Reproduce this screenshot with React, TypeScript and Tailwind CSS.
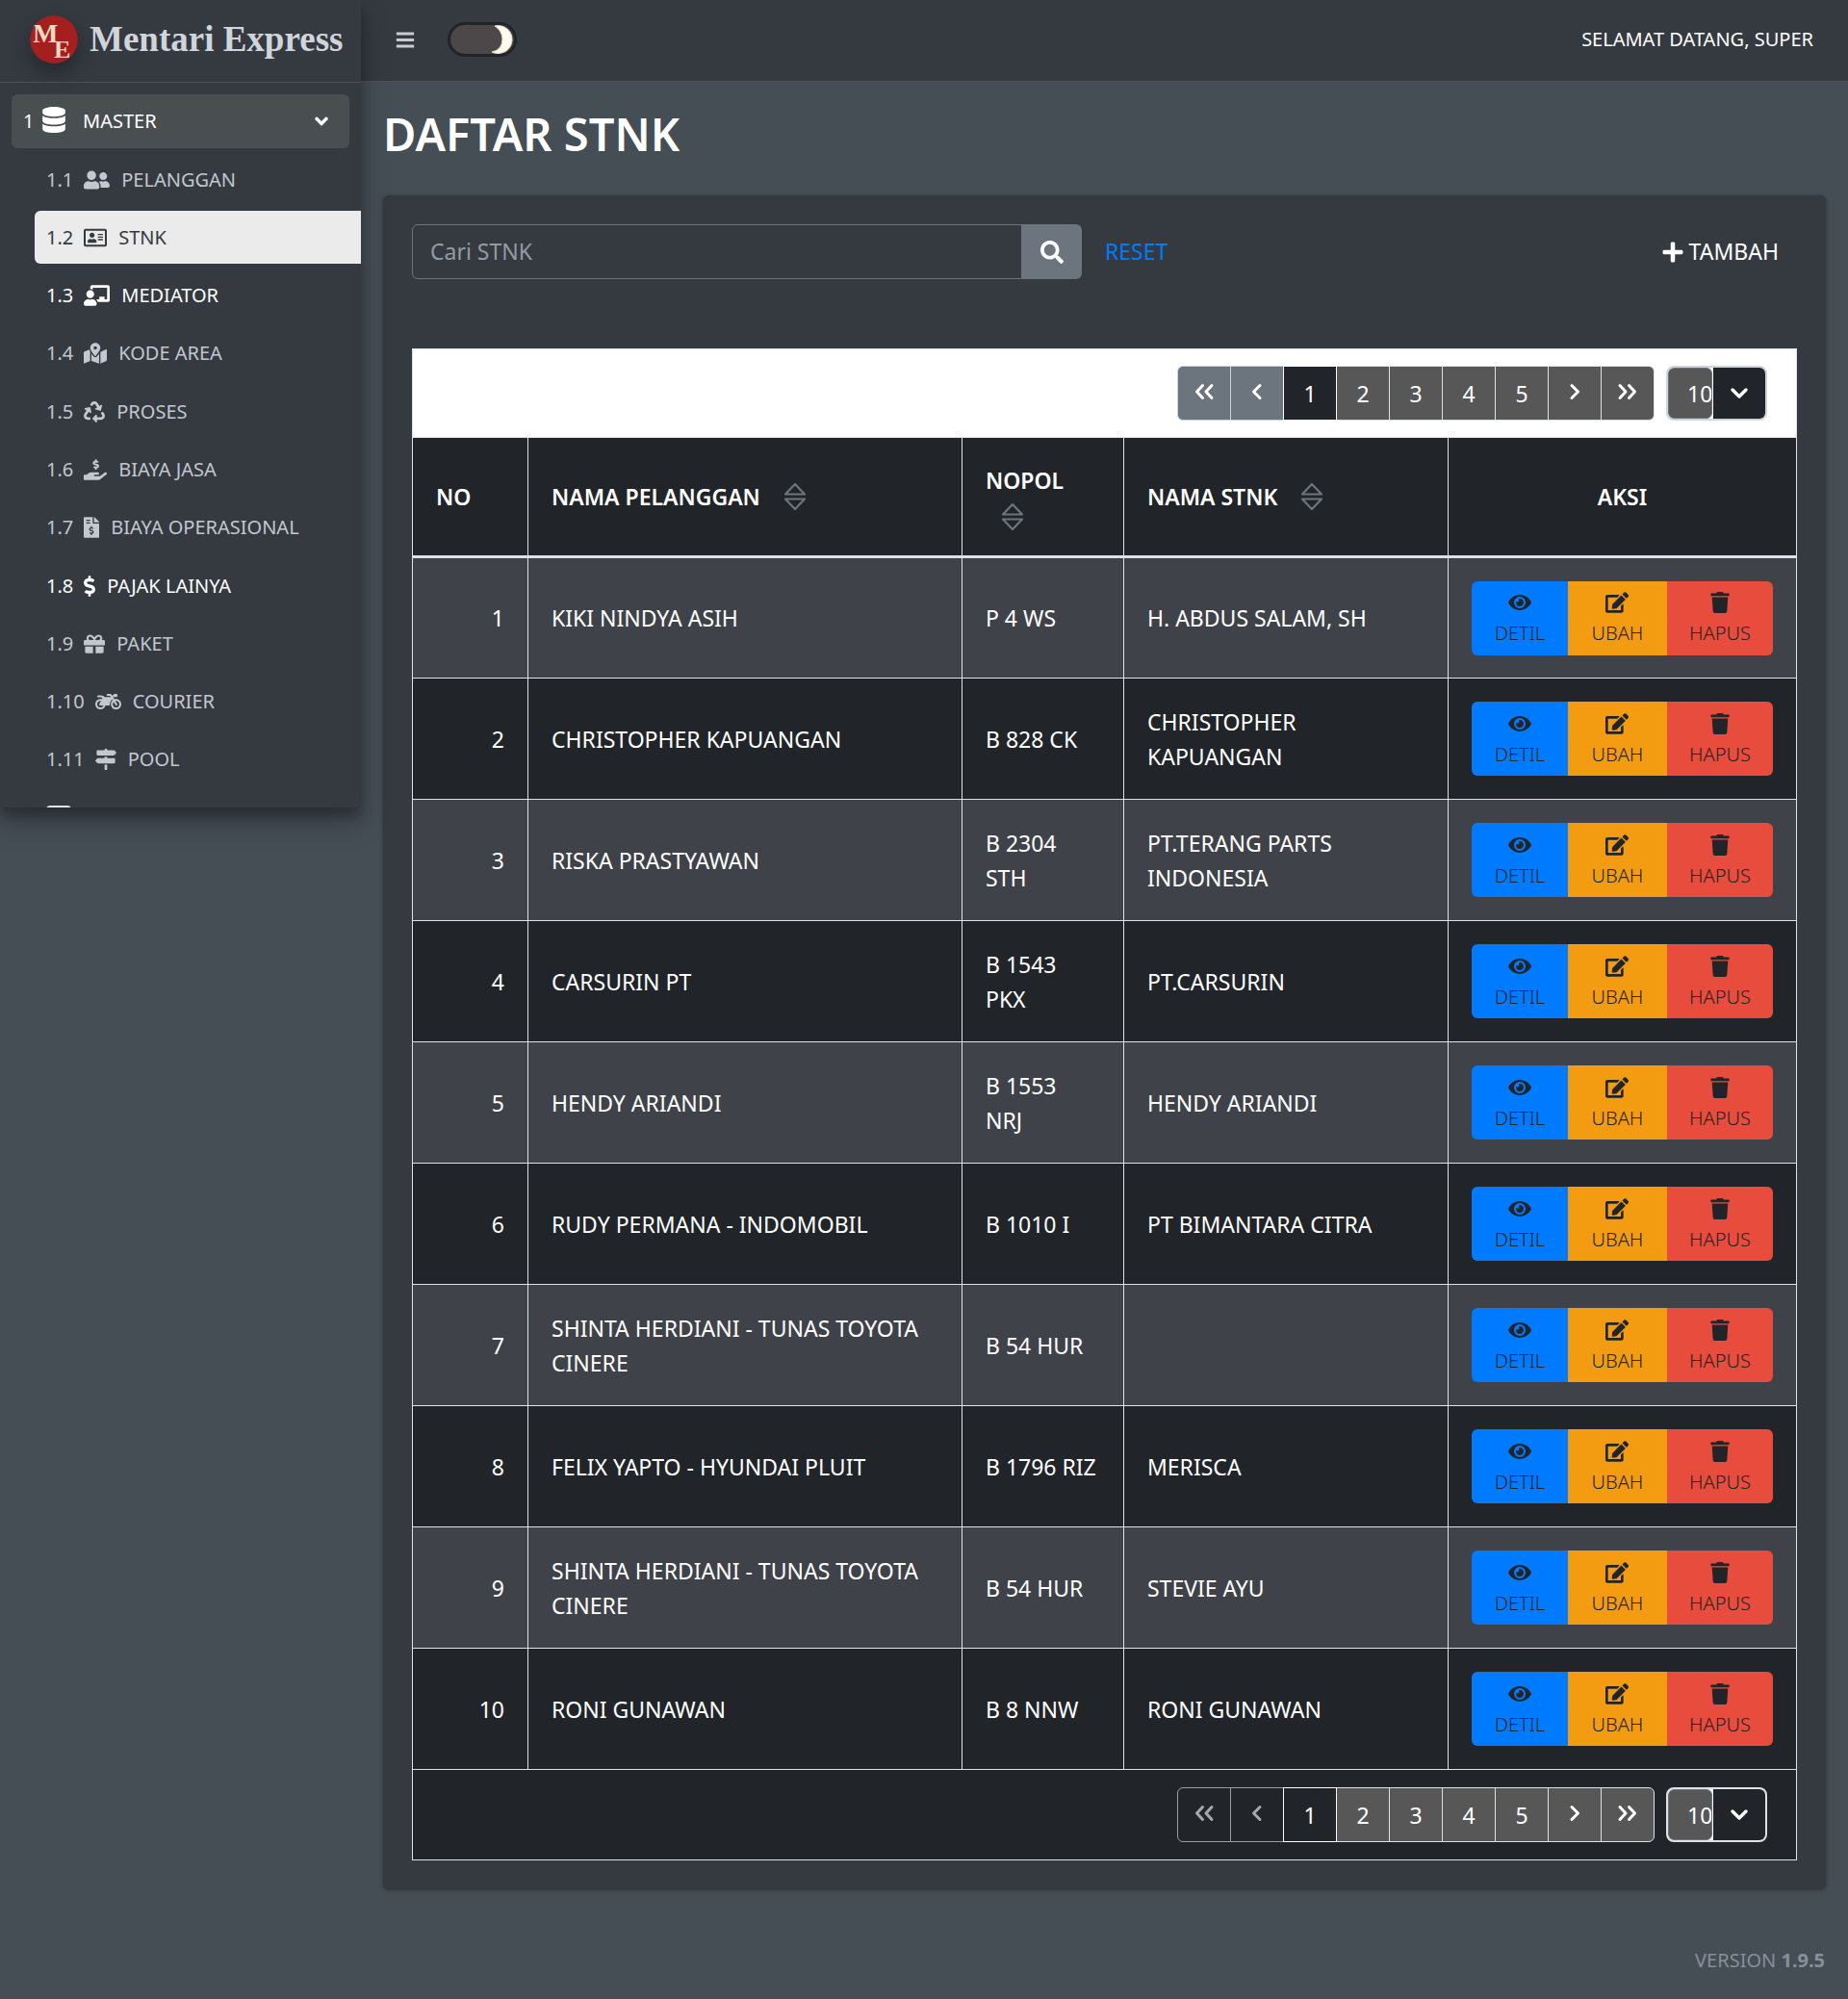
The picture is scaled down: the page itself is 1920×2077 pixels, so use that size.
import { useState } from "react";
import type { ReactNode } from "react";
import {
  FaDatabase, FaUserFriends, FaRegAddressCard, FaChalkboardTeacher, FaMapMarkedAlt, FaRecycle,
  FaHandHoldingUsd, FaFileInvoiceDollar, FaDollarSign, FaGift, FaMotorcycle, FaMapSigns,
  FaAngleDown, FaBars, FaSearch, FaPlus, FaEye, FaEdit, FaTrash,
} from "react-icons/fa";

const menu: { no: string; label: string; icon: ReactNode; tone?: "active" | "bright" }[] = [
  { no: "1.1", label: "PELANGGAN", icon: <FaUserFriends className="h-[22px] w-[27px]" /> },
  { no: "1.2", label: "STNK", icon: <FaRegAddressCard className="h-[22px] w-6" />, tone: "active" },
  { no: "1.3", label: "MEDIATOR", icon: <FaChalkboardTeacher className="h-[22px] w-[27px]" />, tone: "bright" },
  { no: "1.4", label: "KODE AREA", icon: <FaMapMarkedAlt className="h-[22px] w-6" /> },
  { no: "1.5", label: "PROSES", icon: <FaRecycle className="h-[22px] w-[22px]" /> },
  { no: "1.6", label: "BIAYA JASA", icon: <FaHandHoldingUsd className="h-[22px] w-6" /> },
  { no: "1.7", label: "BIAYA OPERASIONAL", icon: <FaFileInvoiceDollar className="h-[22px] w-4" /> },
  { no: "1.8", label: "PAJAK LAINYA", icon: <FaDollarSign className="h-[22px] w-3" />, tone: "bright" },
  { no: "1.9", label: "PAKET", icon: <FaGift className="h-[22px] w-[22px]" /> },
  { no: "1.10", label: "COURIER", icon: <FaMotorcycle className="h-[22px] w-[27px]" /> },
  { no: "1.11", label: "POOL", icon: <FaMapSigns className="h-[22px] w-[22px]" /> },
];

const rows = [
  ["KIKI NINDYA ASIH", "P 4 WS", "H. ABDUS SALAM, SH"],
  ["CHRISTOPHER KAPUANGAN", "B 828 CK", "CHRISTOPHER KAPUANGAN"],
  ["RISKA PRASTYAWAN", "B 2304\nSTH", "PT.TERANG PARTS INDONESIA"],
  ["CARSURIN PT", "B 1543\nPKX", "PT.CARSURIN"],
  ["HENDY ARIANDI", "B 1553\nNRJ", "HENDY ARIANDI"],
  ["RUDY PERMANA - INDOMOBIL", "B 1010 I", "PT BIMANTARA CITRA"],
  ["SHINTA HERDIANI - TUNAS TOYOTA CINERE", "B 54 HUR", ""],
  ["FELIX YAPTO - HYUNDAI PLUIT", "B 1796 RIZ", "MERISCA"],
  ["SHINTA HERDIANI - TUNAS TOYOTA CINERE", "B 54 HUR", "STEVIE AYU"],
  ["RONI GUNAWAN", "B 8 NNW", "RONI GUNAWAN"],
];

function Chevrons({ double = false, left = false }: { double?: boolean; left?: boolean }) {
  return (
    <svg viewBox="0 0 22 18" className={left ? "mb-[3px] h-[18px] w-[22px] rotate-180" : "mb-[3px] h-[18px] w-[22px]"} fill="none" stroke="currentColor" strokeWidth="3" strokeLinecap="round" strokeLinejoin="round" aria-hidden="true">
      {double ? <path d="M3 2.500 9 9l-6 6.500M12.500 2.500 18.500 9l-6 6.500" /> : <path d="M8 2.500 14.500 9 8 15.500" />}
    </svg>
  );
}

function SortIcon() {
  return (
    <svg viewBox="0 0 24 30" className="h-[30px] w-6 shrink-0" fill="none" stroke="#6c757d" strokeWidth="2.2" strokeLinejoin="round" aria-hidden="true">
      <path d="M12 2 22 12.500H2zM12 28 22 17.500H2z" />
    </svg>
  );
}

function Pagination({ footer = false }: { footer?: boolean }) {
  const disabled = footer
    ? "border-[#9a9da1] bg-[#212529] text-[#a6a9ad]"
    : "border-[#ced4da] bg-[#6c757d] text-white";
  const base = "-ml-px flex h-[57px] w-14 items-center justify-center border";
  const normal = base + " border-[#dee2e6] bg-[#575757] text-white";
  return (
    <div className="flex items-center justify-end gap-3 pr-[30px]">
      <nav aria-label="Halaman" className="flex text-[23px]">
        <button disabled aria-label="Pertama" className={base + " rounded-l-md " + disabled}><Chevrons double left /></button>
        <button disabled aria-label="Sebelumnya" className={base + " " + disabled}><Chevrons left /></button>
        <button aria-current="page" className={base + " relative border-white bg-[#212529] text-white"}>1</button>
        <button className={normal}>2</button>
        <button className={normal}>3</button>
        <button className={normal}>4</button>
        <button className={normal}>5</button>
        <button aria-label="Berikutnya" className={normal}><Chevrons /></button>
        <button aria-label="Terakhir" className={normal + " rounded-r-md"}><Chevrons double /></button>
      </nav>
      <div className={"relative flex h-[57px] w-[105px] overflow-hidden rounded-lg border-2 bg-white text-white " + (footer ? "border-[#dee2e6]" : "border-[#ced4da]")}>
        <select aria-label="Baris per halaman" defaultValue="10" className="w-[46px] appearance-none overflow-hidden rounded-md border border-[#6c757d] bg-[#575757] pl-[19px] text-[23px] outline-none">
          <option>10</option>
          <option>20</option>
          <option>50</option>
        </select>
        <span className="pointer-events-none ml-px flex flex-1 items-center justify-center bg-[#212529]">
          <svg viewBox="0 0 20 14" className="h-[14px] w-5" fill="none" stroke="currentColor" strokeWidth="3.4" strokeLinecap="round" strokeLinejoin="round" aria-hidden="true"><path d="m3 3 7 7 7-7" /></svg>
        </span>
      </div>
    </div>
  );
}

function Brand() {
  return (
    <a href="#" className="flex h-[86px] shrink-0 items-center gap-3 border-b border-[#4b545c] pb-1 pl-[31px] text-[#d0d4db]">
      <svg viewBox="0 0 50 50" className="h-[50px] w-[50px] shrink-0 rounded-full shadow-[0_10px_20px_rgba(0,0,0,0.3)]" aria-hidden="true">
        <circle cx="25" cy="25" r="25" fill="#a61f1f" />
        <text x="3" y="28" fontFamily="Liberation Serif" fontWeight="700" fontSize="28" fill="#ecd9c0">M</text>
        <text x="25" y="44" fontFamily="Liberation Serif" fontWeight="700" fontSize="26" fill="#ecd9c0">E</text>
      </svg>
      <span className="whitespace-nowrap font-['Liberation_Serif',serif] text-[37px] font-bold">Mentari Express</span>
    </a>
  );
}

function Sidebar() {
  return (
    <aside className="relative z-10 flex h-[839px] w-[375px] shrink-0 flex-col overflow-hidden bg-[#343a40] shadow-[0_14px_28px_rgba(0,0,0,0.25),0_10px_10px_rgba(0,0,0,0.22)]">
      <Brand />
      <nav className="pt-3">
        <a href="#" className="mx-3 flex h-14 items-center rounded-md bg-[#494e51] pl-3 pr-[18px] text-[20px] text-white">
          <span className="w-5">1</span>
          <FaDatabase className="mb-1 h-[27px] w-6" />
          <span className="ml-[18px] flex-1">MASTER</span>
          <FaAngleDown className="h-[22px] w-[22px]" />
        </a>
        <ul className="mt-[5px] flex h-[658px] flex-col justify-between pl-9">
          {menu.map((m) => (
            <li key={m.no}>
              <a
                href="#"
                className={
                  "flex h-[55px] items-center gap-3 rounded-l-md pl-3 text-[20px] " +
                  (m.tone === "active" ? "bg-[#ebebeb] text-[#343a40]" : m.tone === "bright" ? "text-white" : "text-[#c2c7d0]")
                }
              >
                <span className="-mr-px">{m.no}</span>
                {m.icon}
                <span>{m.label}</span>
              </a>
            </li>
          ))}
        </ul>
        <div className="ml-12 mt-5 h-5 w-[26px] rounded bg-[#dfe2e6]" />
      </nav>
    </aside>
  );
}

function Actions() {
  const base = "flex h-[77px] flex-col items-center justify-center gap-[7px] pt-[3px] text-[20px] font-light leading-7 text-[#212529]";
  return (
    <div className="flex">
      <button className={base + " w-[100px] rounded-l-md bg-[#007bff]"}><FaEye className="h-[22px] w-6 shrink-0" />DETIL</button>
      <button className={base + " w-[103px] bg-[#f39c12]"}><FaEdit className="h-[22px] w-6 shrink-0" />UBAH</button>
      <button className={base + " w-[110px] rounded-r-md bg-[#e74c3c]"}><FaTrash className="h-[22px] w-5 shrink-0" />HAPUS</button>
    </div>
  );
}

export default function App() {
  const [query, setQuery] = useState("");
  const [dark, setDark] = useState(true);
  const cell = "border border-[#dee2e6] px-6";
  const head = cell + " border-b-[3px] font-semibold";
  return (
    <div className="flex min-h-screen items-start bg-[#454d55] font-['Noto_Sans',sans-serif] text-white">
      <Sidebar />
      <div className="flex min-w-0 flex-1 flex-col">
        <header className="flex h-[85px] items-center border-b border-[#4b545c] bg-[#343a40] pb-0.5 pl-9 pr-9 text-[20px]">
          <button aria-label="Menu" className="text-[#c8ccd0]"><FaBars className="h-[21px] w-5" /></button>
          <label className="relative ml-[34px] flex h-9 w-[72px] cursor-pointer overflow-hidden rounded-full border-[3px] border-[#212529] bg-[#4c4748]">
            <input type="checkbox" aria-label="Mode gelap" checked={dark} onChange={(e) => setDark(e.target.checked)} className="absolute inset-0 opacity-0" />
            <svg viewBox="0 0 30 30" className="ml-auto h-[30px] w-[30px]" aria-hidden="true">
              <path d="M10 1A14.500 14.500 0 1 1 7 28Q18 26 18 14 17 5 10 1Z" fill="#fffbf0" stroke="#e8d9bd" strokeWidth="1" />
            </svg>
          </label>
          <span className="ml-auto">SELAMAT DATANG, SUPER</span>
        </header>
        <main className="px-[23px] pt-[22px]">
          <h1 className="text-[47px] font-semibold leading-[64px]">DAFTAR STNK</h1>
          <section className="mt-8 rounded-md bg-[#343a40] px-[30px] pb-[30px] pt-[30px] shadow-[0_0_1px_rgba(0,0,0,0.3),0_1px_4px_rgba(0,0,0,0.3)]">
            <div className="flex items-center text-[23px]">
              <form className="flex h-[57px] w-[696px]" onSubmit={(e) => e.preventDefault()}>
                <input
                  aria-label="Cari STNK"
                  placeholder="Cari STNK"
                  value={query}
                  onChange={(e) => setQuery(e.target.value)}
                  className="min-w-0 flex-1 rounded-l-md border border-[#6c757d] bg-transparent px-[18px] outline-none placeholder:text-[#939ba2]"
                />
                <button aria-label="Cari" className="flex w-[62px] items-center justify-center rounded-r-md bg-[#6c757d]"><FaSearch className="h-6 w-6" /></button>
              </form>
              <button onClick={() => setQuery("")} className="ml-6 text-[#007bff]">RESET</button>
              <a href="#" className="ml-auto mr-[19px] flex items-center gap-1.5"><FaPlus className="h-6 w-[22px]" />TAMBAH</a>
            </div>
            <table className="mt-[72px] w-full table-fixed border-collapse text-[23px] leading-9">
              <colgroup>
                <col className="w-[120px]" />
                <col />
                <col className="w-[168px]" />
                <col className="w-[337px]" />
                <col className="w-[362px]" />
              </colgroup>
              <thead>
                <tr><td colSpan={5} className="h-[92px] border border-[#dee2e6] bg-white"><Pagination /></td></tr>
                <tr className="h-[124px] bg-[#212529] text-left">
                  <th className={head}>NO</th>
                  <th className={head}><span className="flex items-center gap-6">NAMA PELANGGAN<SortIcon /></span></th>
                  <th className={head}>NOPOL<span className="mt-[5px] block pl-4"><SortIcon /></span></th>
                  <th className={head}><span className="flex items-center gap-6">NAMA STNK<SortIcon /></span></th>
                  <th className={head + " text-center"}>AKSI</th>
                </tr>
              </thead>
              <tbody>
                {rows.map((r, i) => (
                  <tr key={i} className="h-[126px] odd:bg-[#3f4349] even:bg-[#212529]">
                    <td className={cell + " text-right"}>{i + 1}</td>
                    <td className={cell}>{r[0]}</td>
                    <td className={cell + " whitespace-pre-line"}>{r[1]}</td>
                    <td className={cell}>{r[2]}</td>
                    <td className={cell}><Actions /></td>
                  </tr>
                ))}
              </tbody>
              <tfoot>
                <tr><td colSpan={5} className="h-[94px] border border-[#dee2e6] bg-[#212529]"><Pagination footer /></td></tr>
              </tfoot>
            </table>
          </section>
        </main>
        <footer className="mt-[58px] pr-6 text-right text-[20px] leading-8 text-[#869099]">VERSION <b>1.9.5</b></footer>
      </div>
    </div>
  );
}
